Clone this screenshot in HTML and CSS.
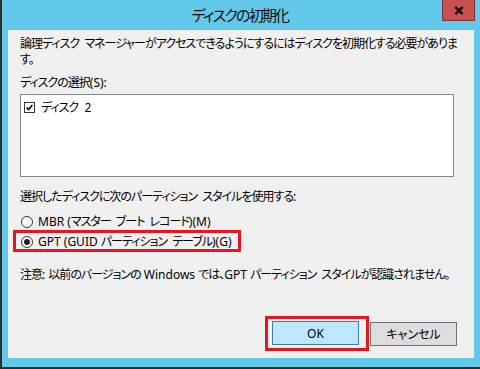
FILE: index.html
```html
<!DOCTYPE html>
<html lang="ja">
<head>
  <meta charset="UTF-8">
  <title>ディスクの初期化</title>
  <link rel="stylesheet" href="styles.css">
</head>
<body>
  <div class="window">
    <div class="titlebar">
      <span class="title">ディスクの初期化</span>
      <div class="close-button">
        <svg width="10" height="9" viewBox="0 0 10 9">
          <path d="M1.5 1 L8.5 8 M8.5 1 L1.5 8" stroke="#000" stroke-width="2.4" fill="none"/>
        </svg>
      </div>
    </div>

    <div class="panel">
      <p class="intro">論理ディスク マネージャーがアクセスできるようにするにはディスクを初期化する必要がありま<br>す。</p>

      <div class="label">ディスクの選択<span class="en">(S):</span></div>
      <div class="disk-list">
        <div class="disk-item">
          <span class="checkbox">
            <svg width="11" height="11" viewBox="0 0 11 11">
              <path d="M2 5.5 L4.3 8 L9 2.5" stroke="#000" stroke-width="1.9" fill="none"/>
            </svg>
          </span>
          <span>ディスク<span class="en"> &nbsp;2</span></span>
        </div>
      </div>

      <div class="label style-label">選択したディスクに次のパーティション スタイルを使用する<span class="en">:</span></div>
      <div class="option">
        <span class="radio"></span>
        <span><span class="en">MBR (</span>マスター ブート レコード<span class="en">)(M)</span></span>
      </div>
      <div class="option highlight">
        <span class="radio checked"></span>
        <span><span class="en">GPT (GUID </span>パーティション テーブル<span class="en">)(G)</span></span>
      </div>

      <p class="note">注意<span class="en">: </span>以前のバージョンの<span class="en"> Windows </span>では、<span class="en">GPT </span>パーティション スタイルが認識されません。</p>

      <div class="buttons">
        <span class="button-mark">
          <button class="btn btn-default">OK</button>
        </span>
        <button class="btn">キャンセル</button>
      </div>
    </div>
  </div>
</body>
</html>
```

FILE: styles.css
```css
:root {
  --frame: #62c9ea;
  --panel: #f0f0f0;
  --mark: #e8141f;
}

* {
  box-sizing: border-box;
}

body {
  margin: 0;
  font-family: "Noto Sans", "Noto Sans CJK JP", sans-serif;
  font-size: 12px;
  letter-spacing: -1px;
  word-spacing: 3px;
  color: #000;
  font-feature-settings: "palt";
}

.en {
  letter-spacing: 0;
  word-spacing: 0;
}

.window {
  width: 480px;
  height: 369px;
  background-color: var(--frame);
  border-left: 2px solid #2e2e2e;
  border-bottom: 2px solid #2e2e2e;
  display: flex;
  flex-direction: column;
}

.titlebar {
  position: relative;
  height: 30px;
  display: flex;
  align-items: center;
  justify-content: center;
  padding-right: 2px;
}

.title {
  font-size: 15px;
  letter-spacing: -1.8px;
  line-height: 30px;
  color: #111;
  margin-top: -1px;
}

.close-button {
  position: absolute;
  top: 0;
  left: 440px;
  width: 33px;
  height: 21px;
  background-color: #c75050;
  border: 1px solid #7a3333;
  border-top: none;
  display: flex;
  align-items: center;
  justify-content: center;
}

.panel {
  margin: 0 6px 0 6px;
  height: 328px;
  background-color: var(--panel);
  padding: 6px 17px 0 12px;
  display: flex;
  flex-direction: column;
}

p {
  margin: 0;
}

.intro {
  line-height: 16px;
}

.label, .note, .option {
  line-height: 15px;
}

.label {
  margin-top: 7px;
}

.disk-list {
  margin-top: 4px;
  width: 434px;
  height: 83px;
  background-color: #fff;
  border: 1px solid #828790;
  padding: 5px 2px;
}

.disk-item {
  display: flex;
  align-items: center;
  gap: 6px;
  line-height: 15px;
}

.checkbox {
  width: 11px;
  height: 11px;
  border: 1px solid #333;
  background-color: #fff;
  display: flex;
  align-items: center;
  justify-content: center;
  margin-left: 1px;
}

.checkbox svg {
  display: block;
}

.style-label {
  margin-top: 12px;
}

.option {
  display: flex;
  align-items: center;
  gap: 5px;
  align-self: flex-start;
  padding: 1px 6px 0 5px;
  border: 3px solid transparent;
  margin-left: -7px;
  height: 22px;
}

.style-label + .option {
  margin-top: 6px;
}

.highlight {
  border-color: var(--mark);
  margin-top: -2px;
}

.radio {
  width: 12px;
  height: 12px;
  border: 1px solid #333;
  border-radius: 50%;
  background-color: #fff;
  display: flex;
  align-items: center;
  justify-content: center;
}

.radio.checked::after {
  content: "";
  width: 6px;
  height: 6px;
  border-radius: 50%;
  background-color: #222;
}

.note {
  margin-top: 15px;
}

.buttons {
  margin-top: auto;
  margin-bottom: 7px;
  display: flex;
  justify-content: flex-end;
  align-items: center;
  gap: 1px;
}

.button-mark {
  border: 3px solid var(--mark);
  padding: 2px 7px 3px 4px;
  display: flex;
}

.btn {
  width: 87px;
  height: 24px;
  font-family: inherit;
  font-size: 12px;
  letter-spacing: 0;
  font-feature-settings: "palt";
  color: #000;
  background-color: #dddddd;
  border: 1px solid #707070;
  padding: 0;
  margin: 0;
}

.btn-default {
  background-color: #bee6fd;
  border-color: #3c7fb1;
}
```
